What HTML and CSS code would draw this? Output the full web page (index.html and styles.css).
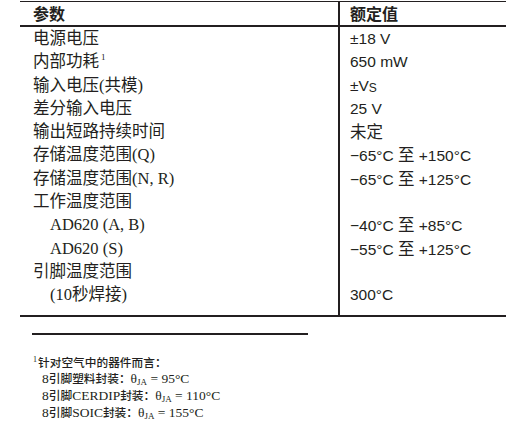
FILE: index.html
```html
<!DOCTYPE html>
<html lang="zh-CN">
<head>
<meta charset="utf-8">
<title>绝对最大额定值</title>
<link rel="stylesheet" href="styles.css">
</head>
<body>
<div class="spec">
  <div class="hd c1">参数</div>
  <div class="hd c2">额定值</div>

  <div class="c1">电源电压</div>
  <div class="c2">±18 V</div>

  <div class="c1">内部功耗<sup class="fn">1</sup></div>
  <div class="c2">650 mW</div>

  <div class="c1">输入电压(共模)</div>
  <div class="c2">±V<sub class="vs">S</sub></div>

  <div class="c1">差分输入电压</div>
  <div class="c2">25 V</div>

  <div class="c1">输出短路持续时间</div>
  <div class="c2"><span class="zh">未定</span></div>

  <div class="c1">存储温度范围(Q)</div>
  <div class="c2">−65°C <span class="zh">至</span> +150°C</div>

  <div class="c1">存储温度范围(N, R)</div>
  <div class="c2">−65°C <span class="zh">至</span> +125°C</div>

  <div class="c1">工作温度范围</div>
  <div class="c2"></div>

  <div class="c1 ind">AD620 (A, B)</div>
  <div class="c2">−40°C <span class="zh">至</span> +85°C</div>

  <div class="c1 ind">AD620 (S)</div>
  <div class="c2">−55°C <span class="zh">至</span> +125°C</div>

  <div class="c1">引脚温度范围</div>
  <div class="c2"></div>

  <div class="c1 ind last">(10秒焊接)</div>
  <div class="c2 last">300°C</div>
</div>

<div class="rule"></div>

<div class="notes">
  <div class="nl"><sup class="nsup">1</sup><span class="zs">针对空气中的器件而言：</span></div>
  <div class="nl sub-l">8<span class="zs">引脚塑料封装：</span>θ<sub class="ja">JA</sub> = 95°C</div>
  <div class="nl sub-l">8<span class="zs">引脚</span>CERDIP<span class="zs">封装：</span>θ<sub class="ja">JA</sub> = 110°C</div>
  <div class="nl sub-l">8<span class="zs">引脚</span>SOIC<span class="zs">封装：</span>θ<sub class="ja">JA</sub> = 155°C</div>
</div>
</body>
</html>
```

FILE: styles.css
```css
html, body {
  margin: 0;
  padding: 0;
  background: #ffffff;
  color: #231f20;
}

.spec {
  margin: 1px 0 0 20px;
  width: 486px;
  display: grid;
  grid-template-columns: 318px 1fr;
  border-top: 1px solid #231f20;
  border-bottom: 2px solid #231f20;
}

.c1,
.c2 {
  height: 23.3px;
  line-height: 23.3px;
  white-space: nowrap;
}

.c1 {
  padding-left: 13px;
  font-family: "Liberation Serif", "Noto Sans CJK SC", serif;
  font-size: 16.5px;
}

.c2 {
  padding-left: 10px;
  border-left: 2px solid #231f20;
  font-family: "Liberation Sans", "Noto Sans CJK SC", sans-serif;
  font-size: 15.5px;
}

.c1.ind {
  padding-left: 30px;
}

.hd {
  height: 23px;
  line-height: 23px;
  border-bottom: 2px solid #231f20;
  font-family: "Noto Sans CJK SC", sans-serif;
  font-size: 16px;
  font-weight: 700;
}

.last {
  padding-bottom: 8.4px;
}

.zh {
  font-family: "Noto Sans CJK SC", sans-serif;
  font-size: 16.5px;
}

.fn {
  font-size: 9px;
  line-height: 0;
  vertical-align: 7px;
  margin-left: 2px;
}

.vs {
  font-size: 12px;
  line-height: 0;
  vertical-align: -1px;
}

.rule {
  margin: 16px 0 0 32px;
  width: 276px;
  height: 2px;
  background: #231f20;
}

.notes {
  margin: 18.7px 0 0 33px;
  font-family: "Liberation Serif", "Noto Sans CJK SC", serif;
  font-size: 13.5px;
}

.nl {
  height: 16.7px;
  line-height: 16.7px;
  white-space: nowrap;
}

.nl.sub-l {
  padding-left: 9px;
}

.zs {
  font-family: "Noto Sans CJK SC", sans-serif;
  font-size: 11.7px;
  font-weight: 500;
}

.nsup {
  font-size: 8px;
  line-height: 0;
  vertical-align: 5px;
  margin-right: 1px;
}

.ja {
  font-size: 9px;
  line-height: 0;
  vertical-align: -2px;
}
```
